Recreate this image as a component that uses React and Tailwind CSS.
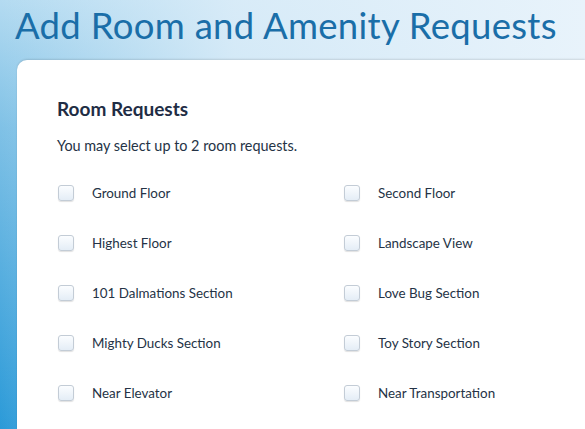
import React from "react";

const left = ["Ground Floor", "Highest Floor", "101 Dalmations Section", "Mighty Ducks Section", "Near Elevator"];
const right = ["Second Floor", "Landscape View", "Love Bug Section", "Toy Story Section", "Near Transportation"];

function Item({ label }) {
  return (
    <label className="flex items-center h-[50px] gap-[18px] pl-[1px]">
      <span className="w-[16px] h-[16px] rounded-[3px] border border-[#c3ccd6] bg-[linear-gradient(to_bottom,#fbfdff,#e4edf6)] shadow-[0_1px_1px_rgba(0,0,0,0.12)]" />
      <span className="text-[13.4px] text-[#253346]">{label}</span>
    </label>
  );
}

export default function App() {
  return (
    <div
      className="w-full h-[429px] overflow-hidden flex flex-col bg-[linear-gradient(to_right,rgba(236,245,252,0)_0%,rgba(222,238,249,0.85)_40%,#e8f3fb_100%),linear-gradient(to_bottom,#b4dbf1_0%,#7fc1e6_30%,#2b9ad8_100%)]"
      style={{ fontFamily: "Lato, 'Noto Sans', sans-serif" }}
    >
      <h1 className="h-[60px] pl-[15px] pt-[3px] text-[36.5px] leading-[44px] font-normal text-[#1a6ea8] tracking-[0.3px]">
        Add Room and Amenity Requests
      </h1>
      <div className="flex-1 ml-[17px] bg-white rounded-tl-[10px] shadow-[0_-1px_2px_rgba(0,0,0,0.12)] pl-[40px] pt-[37px]">
        <h2 className="text-[19px] leading-[24px] font-bold text-[#1f2d45]">Room Requests</h2>
        <p className="mt-[16px] text-[14.4px] leading-[18px] text-[#253346]">You may select up to 2 room requests.</p>
        <div className="mt-[13px] grid grid-cols-[286px_1fr]">
          {left.map((l, i) => (
            <React.Fragment key={i}>
              <Item label={l} />
              <Item label={right[i]} />
            </React.Fragment>
          ))}
        </div>
      </div>
    </div>
  );
}
